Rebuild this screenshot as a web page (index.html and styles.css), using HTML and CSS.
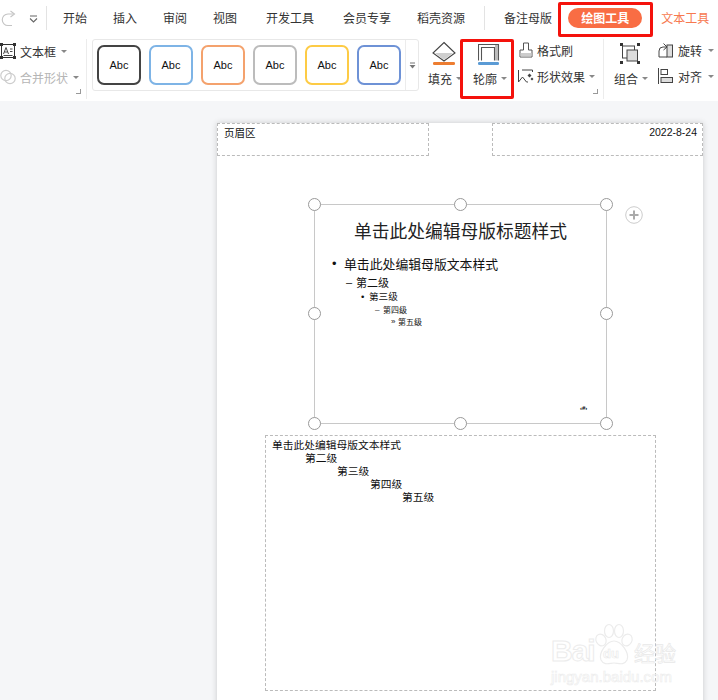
FILE: index.html
```html
<!DOCTYPE html>
<html lang="zh-CN">
<head>
    <meta charset="UTF-8">
    <title>绘图工具</title>
    <link rel="stylesheet" href="styles.css">
</head>
<body>
    <header class="ribbon">
        <nav class="tabs">
            <svg class="redo" width="16" height="18" viewBox="0 0 16 18"><path d="M12 15.5 H8 A5.7 5.7 0 0 1 8 4 H13.5" fill="none" stroke="#c4c4c4" stroke-width="1.1"/><path d="M10.5 1 L14.5 4 L10.5 7" fill="none" stroke="#c4c4c4" stroke-width="1.1"/></svg>
            <svg class="more" width="9" height="8" viewBox="0 0 9 8"><path d="M1 1 H8 M1 3.5 L4.5 7 L8 3.5" fill="none" stroke="#666" stroke-width="1.1"/></svg>
            <span class="tab-sep tab-sep-first"></span>
            <a class="tab">开始</a>
            <a class="tab">插入</a>
            <a class="tab">审阅</a>
            <a class="tab">视图</a>
            <a class="tab tab-wide">开发工具</a>
            <a class="tab tab-wide">会员专享</a>
            <a class="tab">稻壳资源</a>
            <span class="tab-sep"></span>
            <a class="tab">备注母版</a>
            <a class="tab tab-active">绘图工具</a>
            <a class="tab tab-orange">文本工具</a>
        </nav>
        <div class="tools">
            <section class="group group-text">
                <div class="row-item">
                    <svg width="16" height="16" viewBox="0 0 16 16"><rect x="1.5" y="1.5" width="13" height="13" fill="none" stroke="#333"/><rect x="0" y="0" width="3" height="3" fill="#333"/><rect x="13" y="0" width="3" height="3" fill="#333"/><rect x="0" y="13" width="3" height="3" fill="#333"/><rect x="13" y="13" width="3" height="3" fill="#333"/><path d="M3.5 11 L6 4.5 L8.5 11 M4.5 9 H7.5 M10 6 H12.5 M10 8.5 H12.5 M3.5 12.5 H12.5" fill="none" stroke="#333" stroke-width=".9"/></svg>
                    <span>文本框</span><i class="caret"></i>
                </div>
                <div class="row-item row-disabled">
                    <svg width="16" height="16" viewBox="0 0 16 16"><circle cx="6" cy="6.5" r="5.2" fill="none" stroke="#ccc" stroke-width="1.2"/><circle cx="10" cy="9.5" r="5.2" fill="none" stroke="#ccc" stroke-width="1.2"/></svg>
                    <span>合并形状</span><i class="caret"></i>
                </div>
                <i class="corner"></i>
            </section>
            <section class="gallery">
                <button class="abc abc-black">Abc</button>
                <button class="abc abc-blue">Abc</button>
                <button class="abc abc-orange">Abc</button>
                <button class="abc abc-gray">Abc</button>
                <button class="abc abc-yellow">Abc</button>
                <button class="abc abc-indigo">Abc</button>
                <div class="gallery-more">
                    <svg width="7" height="7" viewBox="0 0 7 7"><path d="M1 1 H6" stroke="#777"/><path d="M0.5 3 H6.5 L3.5 6.5 Z" fill="#777"/></svg>
                </div>
            </section>
            <section class="group group-shape">
                <div class="big-tool big-fill">
                    <svg width="26" height="24" viewBox="0 0 26 24"><path d="M13 1.5 L24 12 L13 20 L2 12 Z" fill="#fff" stroke="#444" stroke-width="1.1"/><path d="M4 12 H22 L13 19 Z" fill="#cfcfcf"/><rect x="2" y="21" width="22" height="3" rx="1.2" fill="#ed7d31"/></svg>
                    <span class="big-label">填充<i class="caret"></i></span>
                </div>
                <div class="big-tool big-line">
                    <svg width="23" height="24" viewBox="0 0 23 24"><path d="M.5 19.5 V3.5 H20.5 V19.5 M3.5 19.5 V6.5 H16.5 V19.5" fill="none" stroke="#555" stroke-width="1.1"/><path d="M17 4 H20 V19.5 H17 Z" fill="#bbb"/><rect x="0" y="21" width="21" height="3" rx="1.2" fill="#5b9bd5"/></svg>
                    <span class="big-label">轮廓<i class="caret"></i></span>
                </div>
                <div class="shape-col">
                    <div class="row-item">
                        <svg class="brush" width="14" height="16" viewBox="0 0 14 16"><path d="M4.5 1 H9.5 V8 H13 V15 H1 V8 H4.5 Z" fill="#fff" stroke="#555"/><rect x="1.5" y="11" width="11" height="3.5" fill="#ccc"/></svg>
                        <span>格式刷</span>
                    </div>
                    <div class="row-item row-tight">
                        <svg width="17" height="14" viewBox="0 0 17 14"><path d="M5 1 H15.5 V3 M1.5 1 V13 L5.5 8 L9.5 13 H11" fill="none" stroke="#444"/><path d="M12.5 4.5 L14.5 6.5 L12.5 8.5 L10.5 6.5 Z M15 8.5 L16.5 10 L15 11.5 L13.5 10 Z" fill="#444"/></svg>
                        <span>形状效果</span><i class="caret"></i>
                    </div>
                </div>
                <i class="corner"></i>
            </section>
            <section class="group group-arrange">
                <div class="big-tool big-group">
                    <svg width="20" height="21" viewBox="0 0 20 21"><rect x="2.5" y="3" width="12" height="12" fill="none" stroke="#444"/><rect x="7" y="7" width="10.5" height="11" fill="#ddd" stroke="#444"/><g fill="#333"><rect x="0" y="0" width="3" height="3"/><rect x="17" y="0" width="3" height="3"/><rect x="0" y="18" width="3" height="3"/><rect x="17" y="18" width="3" height="3"/></g></svg>
                    <span class="big-label">组合<i class="caret"></i></span>
                </div>
                <div class="shape-col">
                    <div class="row-item row-wide">
                        <svg width="15" height="16" viewBox="0 0 15 16"><rect x="9" y="3" width="5.5" height="12" fill="#ddd" stroke="#444"/><path d="M1 15 V9 a4 4 0 0 1 4 -4 H8 M1 15 H9" fill="none" stroke="#444"/><path d="M5.5 1.5 L9 5 L5.5 8" fill="none" stroke="#444"/></svg>
                        <span>旋转</span><i class="caret"></i>
                    </div>
                    <div class="row-item row-wide">
                        <svg width="15" height="16" viewBox="0 0 15 16"><path d="M.5 0 V16" stroke="#444"/><rect x="3" y="1.5" width="6.5" height="5" fill="#fff" stroke="#444"/><rect x="3" y="9.5" width="11.5" height="5" fill="#ddd" stroke="#444"/></svg>
                        <span>对齐</span><i class="caret"></i>
                    </div>
                </div>
            </section>
        </div>
        <div class="mark mark-tab"></div>
        <div class="mark mark-line"></div>
    </header>

    <main class="canvas">
        <div class="page">
            <div class="holder head-left">页眉区</div>
            <div class="holder head-right">2022-8-24</div>

            <div class="slide">
                <h1 class="slide-title">单击此处编辑母版标题样式</h1>
                <ul class="levels">
                    <li class="lv1"><b>•</b>单击此处编辑母版文本样式</li>
                    <li class="lv2"><b>–</b>第二级</li>
                    <li class="lv3"><b>•</b>第三级</li>
                    <li class="lv4"><b>–</b>第四级</li>
                    <li class="lv5"><b>»</b>第五级</li>
                </ul>
                <span class="slide-num">‹#›</span>
                <i class="handle h-tl"></i><i class="handle h-tc"></i><i class="handle h-tr"></i>
                <i class="handle h-ml"></i><i class="handle h-mr"></i>
                <i class="handle h-bl"></i><i class="handle h-bc"></i><i class="handle h-br"></i>
            </div>
            <div class="add-btn">
                <svg width="18" height="18" viewBox="0 0 18 18"><circle cx="9" cy="9" r="8.3" fill="#fff" stroke="#ccc"/><path d="M9 4.5 V13.5 M4.5 9 H13.5" stroke="#aaa" stroke-width="2"/></svg>
            </div>

            <div class="holder notes">
                <p>单击此处编辑母版文本样式</p>
                <p class="n2">第二级</p>
                <p class="n3">第三级</p>
                <p class="n4">第四级</p>
                <p class="n5">第五级</p>
            </div>
        </div>

        <!-- watermark -->
        <div class="wm">
            <div class="wm-top">
                <span class="wm-bai">Bai</span>
                <svg width="40" height="43" viewBox="0 0 40 43"><g fill="rgba(255,255,255,.6)" stroke="#ececec" stroke-width="1.2"><ellipse cx="15" cy="8" rx="4.5" ry="6.5"/><ellipse cx="25" cy="8" rx="4.5" ry="6.5"/><ellipse cx="7" cy="17" rx="5" ry="6" transform="rotate(-25 7 17)"/><ellipse cx="33" cy="17" rx="5" ry="6" transform="rotate(25 33 17)"/><path d="M20 18 C27 18 36 30 33 37 C30 43 24 40 20 40 C16 40 10 43 7 37 C4 30 13 18 20 18 Z"/></g></svg>
                <span class="wm-du">du</span>
                <span class="wm-cn">经验</span>
            </div>
            <div class="wm-url">jingyan.baidu.com</div>
        </div>
    </main>
</body>
</html>
```

FILE: styles.css
```css
* {
    box-sizing: border-box;
}

html, body {
    margin: 0;
    height: 100%;
    overflow: hidden;
}

body {
    font-family: "Noto Sans CJK SC", "Noto Sans", sans-serif;
    font-size: 12px;
    color: #333;
    background-color: #f5f6f8;
    width: 718px;
    height: 700px;
}

/* ribbon */
.ribbon {
    position: relative;
    background-color: #fff;
    height: 101px;
}

.tabs {
    display: flex;
    align-items: center;
    height: 36px;
    white-space: nowrap;
}

.redo {
    margin-top: 1px;
    flex: none;
}

.more {
    margin-left: 13px;
    margin-top: 1px;
    flex: none;
}

.tab-sep {
    width: 1px;
    height: 24px;
    background-color: #e3e3e3;
    margin: 0 19px 0 -7px;
    flex: none;
}

.tab-sep-first {
    margin: 0 16px 0 8px;
}

.tab {
    flex: none;
    line-height: 20px;
    margin-right: 26px;
}

.tab-wide {
    margin-left: 3px;
}

.tab-active {
    background-color: #f96d44;
    color: #fff;
    font-weight: 700;
    border-radius: 10px;
    padding: 0 13px;
    margin-left: -10px;
    margin-right: 19px;
}

.tab-orange {
    color: #f7794f;
    margin-right: 0;
}

.tools {
    display: flex;
    height: 65px;
    padding-top: 3px;
}

.group {
    position: relative;
    display: flex;
    height: 60px;
    border-right: 1px solid #ececec;
    flex: none;
}

.group-text {
    width: 87px;
    flex-direction: column;
    gap: 8px;
    padding-top: 3px;
}

.group-shape {
    width: 185px;
    padding-left: 9px;
}

.group-arrange {
    width: 114px;
    border-right: none;
    padding-left: 10px;
}

.row-item {
    display: flex;
    align-items: center;
    gap: 4px;
    height: 18px;
    white-space: nowrap;
}

.row-disabled {
    color: #b5b5b5;
}

.row-tight {
    gap: 3px;
}

.row-wide {
    gap: 5px;
}

.brush {
    margin-left: 2px;
}

.caret {
    display: inline-block;
    width: 0;
    height: 0;
    margin-left: 1px;
    border-left: 3px solid transparent;
    border-right: 3px solid transparent;
    border-top: 3px solid #888;
}

.corner {
    position: absolute;
    right: 5px;
    bottom: 5px;
    width: 5px;
    height: 5px;
    border-right: 1px solid #999;
    border-bottom: 1px solid #999;
}

.gallery {
    display: flex;
    flex: none;
    width: 327px;
    height: 52px;
    margin: 0 0 0 5px;
    padding-left: 4px;
    align-items: center;
    gap: 8px;
    border: 1px solid #e8e8e8;
    border-radius: 3px;
}

.abc {
    flex: none;
    width: 44px;
    height: 40px;
    padding: 0;
    font: 11px "Liberation Sans", sans-serif;
    color: #111;
    background-color: #fff;
    border: 2px solid #000;
    border-radius: 7px;
}

.abc-black { border-color: #444; }
.abc-blue { border-color: #7eb4e6; }
.abc-orange { border-color: #f4a26d; }
.abc-gray { border-color: #bcbcbc; }
.abc-yellow { border-color: #fdcb45; }
.abc-indigo { border-color: #6e92d6; }

.gallery-more {
    display: flex;
    align-items: center;
    justify-content: center;
    align-self: stretch;
    flex: 1;
    margin-left: -4px;
    border-left: 1px solid #ececec;
}

.big-tool {
    display: flex;
    flex-direction: column;
    flex: none;
    padding-top: 2px;
}

.big-label {
    display: flex;
    align-items: center;
    gap: 3px;
    margin-top: 4px;
    white-space: nowrap;
    height: 18px;
}

.big-fill {
    width: 45px;
}

.big-fill svg {
    margin-left: 3px;
}

.big-line {
    width: 44px;
}

.big-line svg {
    margin-left: 5px;
}

.big-group {
    width: 44px;
    padding-top: 4px;
}

.big-group svg {
    margin-left: 6px;
}

.big-group .big-label {
    margin-top: 5px;
}

.shape-col {
    display: flex;
    flex-direction: column;
    gap: 8px;
    padding-top: 2px;
}

/* canvas */
.canvas {
    position: relative;
    height: 599px;
    padding: 22px 0 0 217px;
}

.page {
    position: relative;
    width: 486px;
    height: 600px;
    background-color: #fff;
    box-shadow: 0 0 6px rgba(0, 0, 0, .18);
}

.holder {
    position: absolute;
    border: 1px dashed #bbb;
    font-size: 10.5px;
    color: #111;
}

.head-left {
    left: 0;
    top: 0;
    width: 212px;
    height: 33px;
    padding: 0 0 0 6px;
    line-height: 17px;
}

.head-right {
    left: 275px;
    top: 0;
    width: 211px;
    height: 33px;
    padding-right: 5px;
    text-align: right;
    line-height: 17px;
    font-family: "Liberation Sans", sans-serif;
}

.slide {
    position: absolute;
    left: 97px;
    top: 81px;
    width: 293px;
    height: 220px;
    border: 1px solid #c8c8c8;
    color: #111;
}

.slide-title {
    margin: 13px 0 0;
    text-align: center;
    font-size: 17.75px;
    font-weight: 400;
    line-height: 24px;
    color: #222;
}

.levels {
    list-style: none;
    margin: 0;
    padding: 0;
}

.levels li {
    position: relative;
    white-space: nowrap;
}

.levels b {
    position: absolute;
    font-family: "Liberation Sans", sans-serif;
    font-weight: 400;
}

.lv1 {
    margin: 13px 0 0 29px;
    font-size: 12.85px;
    line-height: 18px;
}

.lv1 b { left: -12px; }

.lv2 {
    margin: 1px 0 0 41px;
    font-size: 11px;
    line-height: 16px;
}

.lv2 b { left: -10px; }

.lv3 {
    margin: 0 0 0 54px;
    font-size: 9.6px;
    line-height: 13px;
}

.lv3 b { left: -8px; }

.lv4 {
    margin: 0 0 0 68px;
    font-size: 8px;
    line-height: 13px;
}

.lv4 b { left: -8px; }

.lv5 {
    margin: 0 0 0 83px;
    font-size: 8px;
    line-height: 11px;
}

.lv5 b { left: -7px; }

.slide-num {
    position: absolute;
    left: 265px;
    top: 200px;
    font: 700 6px/6px "Liberation Sans", sans-serif;
    color: #000;
}

.handle {
    position: absolute;
    width: 13px;
    height: 13px;
    background-color: #fff;
    border: 1.5px solid #999;
    border-radius: 50%;
}

.h-tl { left: -7px; top: -7px; }
.h-tc { left: 139px; top: -7px; }
.h-tr { left: 285px; top: -7px; }
.h-ml { left: -7px; top: 102px; }
.h-mr { left: 285px; top: 102px; }
.h-bl { left: -7px; top: 212px; }
.h-bc { left: 139px; top: 212px; }
.h-br { left: 285px; top: 212px; }

.add-btn {
    position: absolute;
    left: 408px;
    top: 83px;
    line-height: 0;
}

.notes {
    left: 48px;
    top: 312px;
    width: 391px;
    height: 256px;
    padding: 2px 0 0 6px;
    font-size: 10.75px;
    line-height: 13px;
}

.notes p {
    margin: 0;
}

.n2 { padding-left: 33px; }
.n3 { padding-left: 65px; }
.n4 { padding-left: 98px; }
.n5 { padding-left: 130px; }

/* red highlight boxes */
.mark {
    position: absolute;
    border: 3px solid #f4120c;
    border-radius: 2px;
}

.mark-tab {
    left: 558px;
    top: 2px;
    width: 95px;
    height: 35px;
}

.mark-line {
    left: 460px;
    top: 39px;
    width: 54px;
    height: 60px;
}

/* watermark */
.wm {
    position: absolute;
    left: 551px;
    top: 522px;
    width: 130px;
    color: #ececec;
}

.wm-top {
    position: relative;
    display: flex;
    align-items: flex-end;
    height: 43px;
}

.wm-bai {
    font: 700 30px/30px "Liberation Sans", sans-serif;
    color: rgba(255, 255, 255, .4);
    -webkit-text-stroke: 1px #ececec;
    width: 43px;
    letter-spacing: -1px;
}

.wm-du {
    position: absolute;
    left: 52px;
    top: 24px;
    font: 700 13px/14px "Liberation Sans", sans-serif;
    color: rgba(255, 255, 255, .4);
    -webkit-text-stroke: .6px #e8e8e8;
}

.wm-cn {
    font-size: 21px;
    line-height: 28px;
    color: rgba(255, 255, 255, .4);
    -webkit-text-stroke: .7px #e8e8e8;
}

.wm-url {
    font: 15px/16px "Liberation Sans", sans-serif;
    color: rgba(255, 255, 255, .4);
    -webkit-text-stroke: .6px #ececec;
    margin-top: 3px;
    white-space: nowrap;
}
```
